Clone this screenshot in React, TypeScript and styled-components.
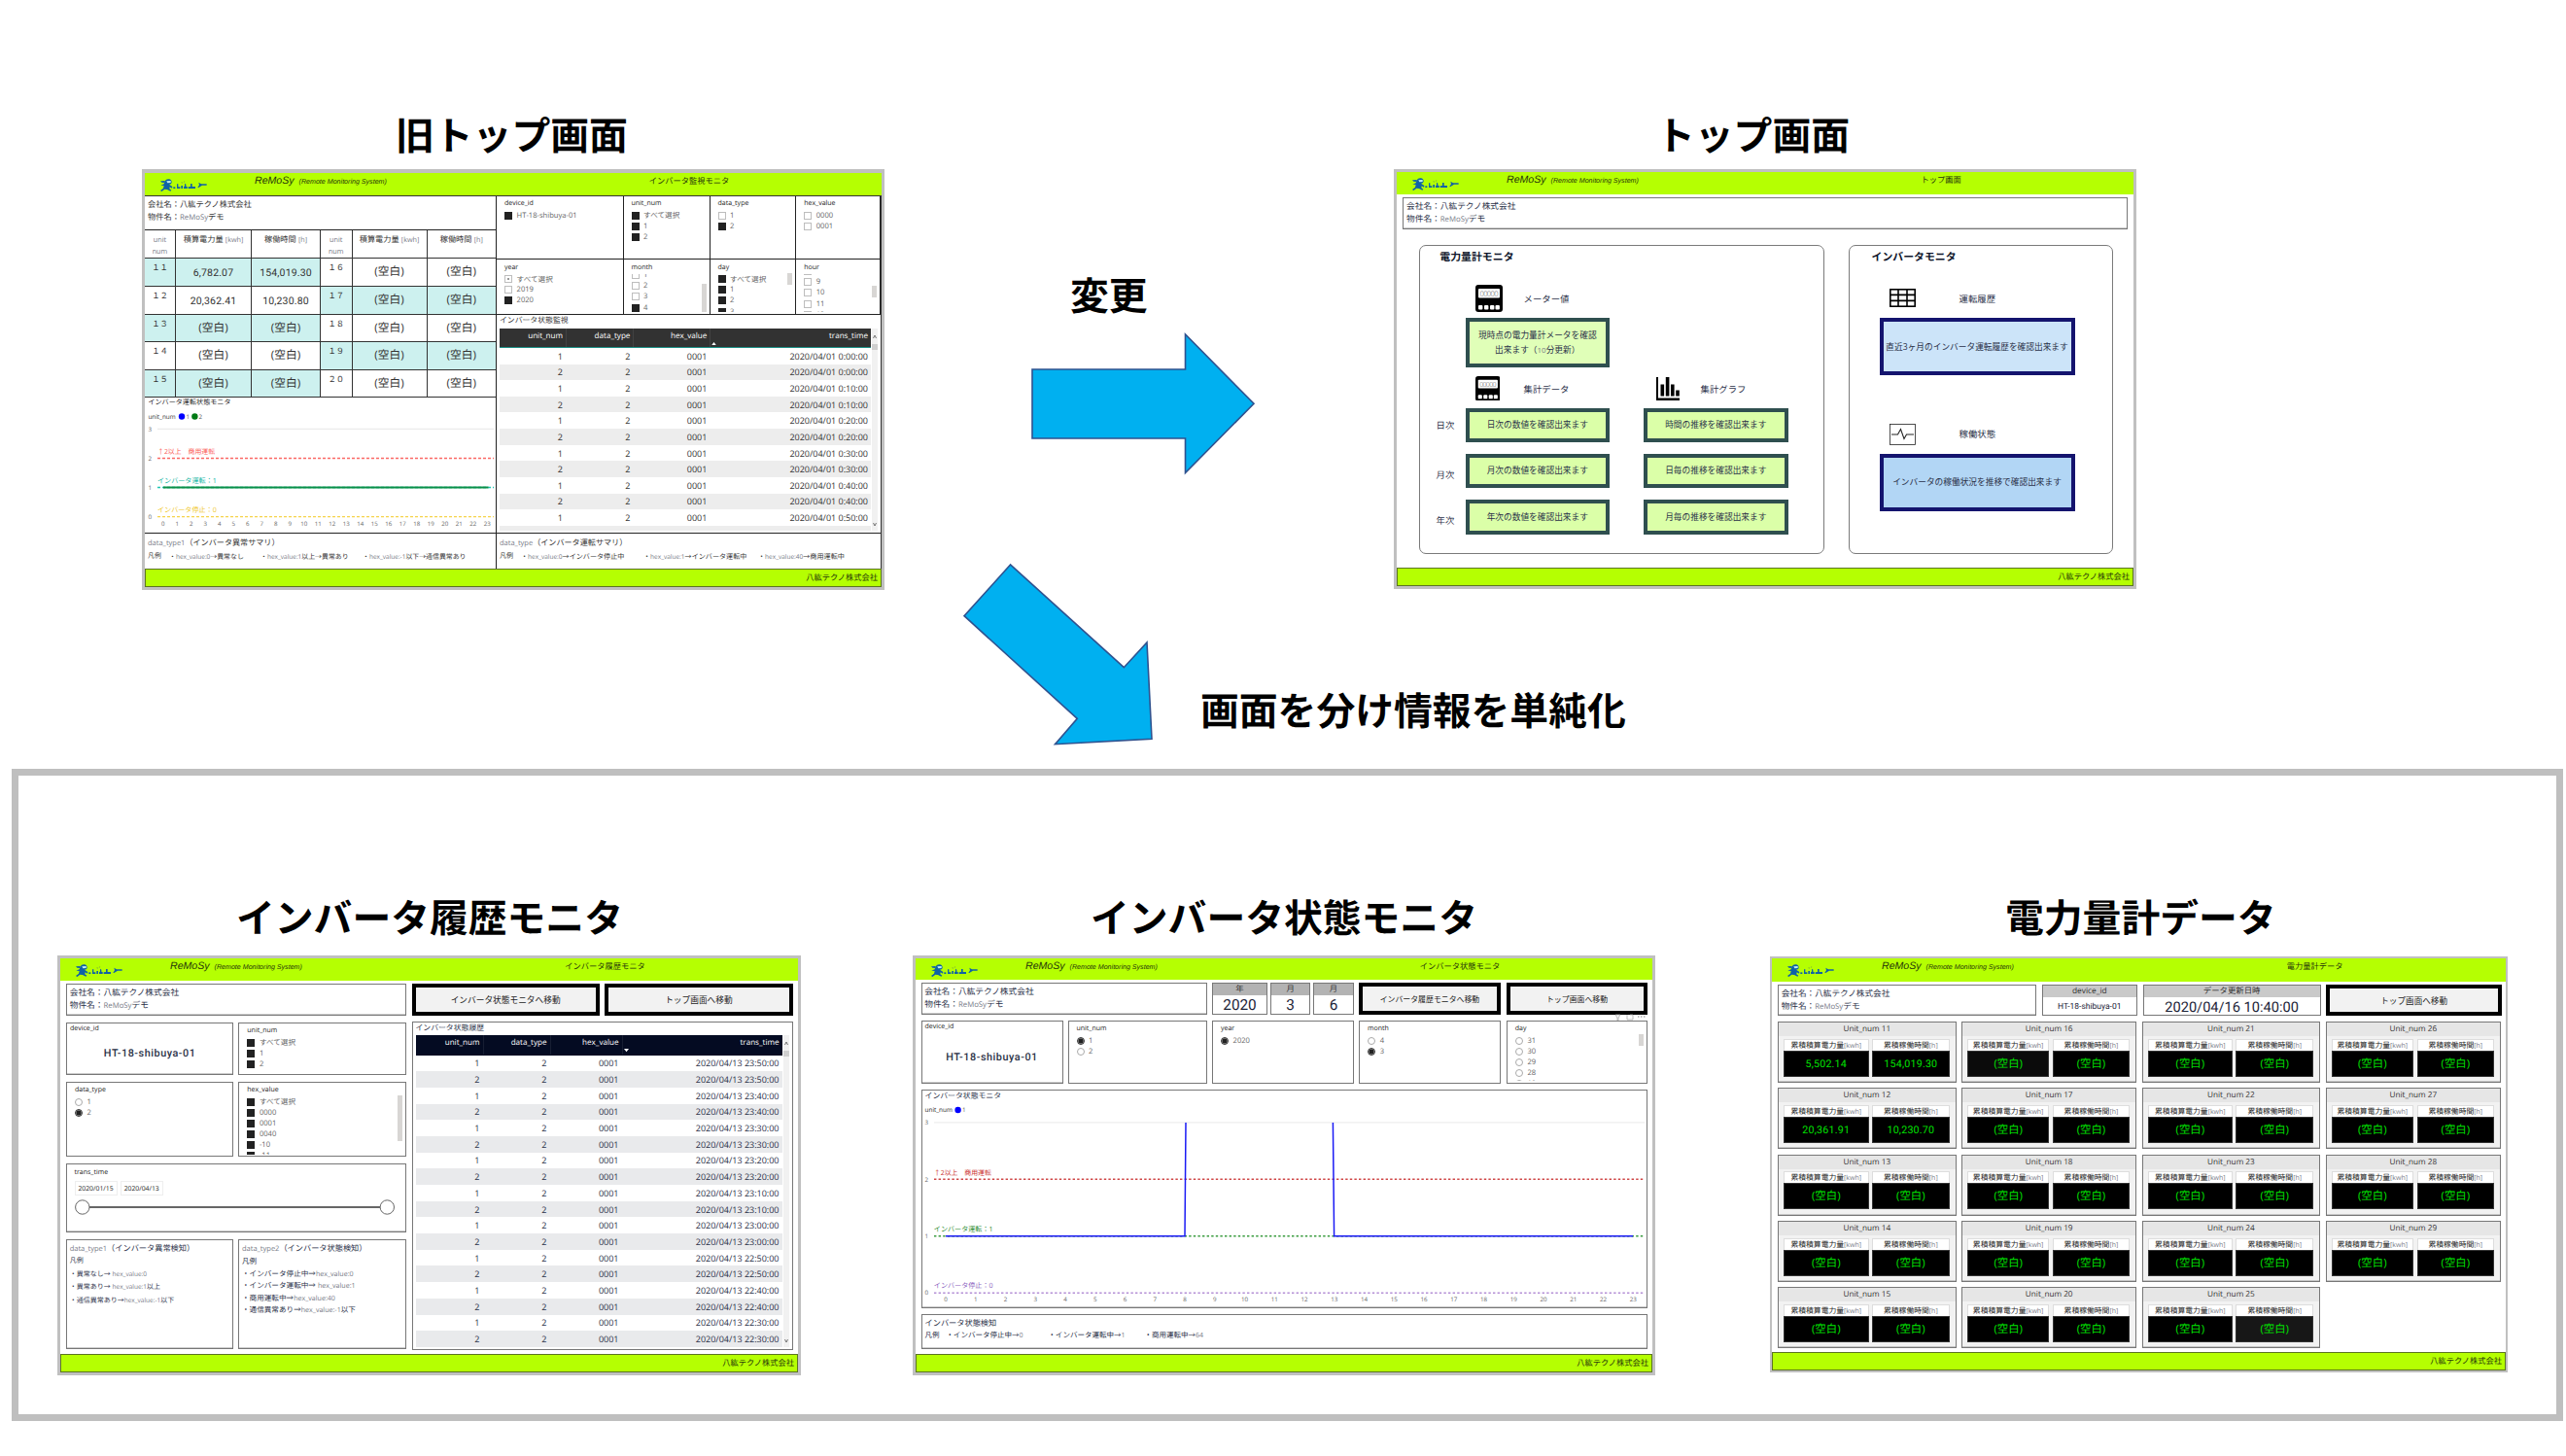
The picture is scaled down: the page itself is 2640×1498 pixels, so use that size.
import React from 'react'
import styled, { createGlobalStyle, css } from 'styled-components'

const GlobalStyle = createGlobalStyle`
  * {
    box-sizing: border-box;
  }

  body {
    margin: 0;
    background: #fff;
    font-family: 'Open Sans', 'Noto Sans CJK JP', sans-serif;
    text-rendering: geometricPrecision;
  }
`

const LIME = '#b5ff02'
const BLANK = '(空白)'

/* ---------- スライド全体 ---------- */

const Slide = styled.main`
  position: relative;
  width: 2640px;
  height: 1498px;
  overflow: hidden;
  background: #fff;
`

const GroupFrame = styled.div`
  position: absolute;
  left: 12px;
  top: 791px;
  width: 2625px;
  height: 671px;
  border: 7px solid #bfbfbf;
`

const Caption = styled.h2<{ $x: number; $y: number }>`
  position: absolute;
  left: ${({ $x }) => $x}px;
  top: ${({ $y }) => $y - 32}px;
  margin: 0;
  font-family: 'Noto Sans CJK JP', sans-serif;
  font-size: 39.8px;
  font-weight: 700;
  line-height: 60px;
  white-space: nowrap;
  color: #000;
`

const Arrows = styled.svg`
  position: absolute;
  left: 980px;
  top: 330px;
`

const Screen = styled.section<{
  $x: number
  $y: number
  $w: number
  $h: number
  $edge?: string
  $color?: string
}>`
  position: absolute;
  left: ${({ $x }) => $x}px;
  top: ${({ $y }) => $y}px;
  width: ${({ $w }) => $w}px;
  height: ${({ $h }) => $h}px;
  display: flex;
  flex-direction: column;
  border: solid #c0c0c0;
  border-width: ${({ $edge }) => $edge ?? '3px'};
  background: #fff;
  color: ${({ $color }) => $color ?? '#2a3048'};
  font-size: 8.7px;
  white-space: nowrap;
`

/* ---------- 共通ヘッダー・フッター ---------- */

const TopBar = styled.header<{ $h: number }>`
  flex: none;
  display: grid;
  grid-template-columns: 113px 249px 1fr;
  height: ${({ $h }) => $h}px;
  background: ${LIME};
  color: #26360a;
`

const LogoSlot = styled.div`
  padding: 5.5px 0 0 16px;
  line-height: 0;
`

const Brand = styled.div`
  padding-top: 1px;
  font-family: 'Liberation Sans', Arial, sans-serif;
  font-style: italic;
  font-size: 10.6px;
  line-height: 15px;

  small {
    margin-left: 2px;
    font-size: 7.1px;
  }
`

const ScreenTitle = styled.div`
  padding-top: 2px;
  text-align: center;
  font-size: 8.25px;
  line-height: 14px;
`

const BottomBar = styled.footer`
  flex: none;
  height: 19px;
  padding-right: 3px;
  border: 1px solid #5c7522;
  background: ${LIME};
  color: #26360a;
  text-align: right;
  font-size: 8.25px;
  line-height: 17.5px;
`

const Logo = () => (
  <svg width="48" height="13.4" viewBox="0 0 144 40" fill="#0f62a6">
    <path d="M14 7Q18 0 26 1Q35 1 35 12Q33 17 27 17L37 24L36 29L29 25L28 31L34 35L31 38L21 33L13 32L4 39L0 36L9 29L11 21L1 20L11 16Z" />
    <path d="M0 7L14 6L13 12L4 11Z" />
    <path d="M19 7L32 6L32 12L22 13Z" fill="#bdeff0" />
    <rect x="40" y="25" width="6" height="5" />
    <path d="M51 16h4v9h6v5H51z" />
    <path d="M64 21h5v9h-5z" />
    <path d="M72 30v-6l3-1v-9l4 3v6l4 1v6z" />
    <path d="M93 15h5v9h10v6H86v-5l7-1z" />
    <path d="M118 11l8 5h17v4h-14l-11 7h-3l5-8z" />
    <path d="M66 9l1 5M74 7l-1 4" stroke="#6c9a4a" strokeWidth="2" fill="none" />
  </svg>
)

const Header = ({ title, h = 23 }: { title: string; h?: number }) => (
  <TopBar $h={h}>
    <LogoSlot>
      <Logo />
    </LogoSlot>
    <Brand>
      ReMoSy <small>(Remote Monitoring System)</small>
    </Brand>
    <ScreenTitle>{title}</ScreenTitle>
  </TopBar>
)

const Footer = () => <BottomBar>八紘テクノ株式会社</BottomBar>

/* ---------- 共通パーツ ---------- */

const Thin = styled.span<{ $size?: number }>`
  font-size: ${({ $size }) => $size ?? 7.8}px;
  color: #777b87;
`

const Box = styled.div<{ $pad?: string }>`
  min-width: 0;
  min-height: 0;
  padding: ${({ $pad }) => $pad ?? '0'};
  overflow: hidden;
  border: 1px solid #777;
  box-shadow: inset 0 -0.6px 0 #999;
`

const CompanyText = styled.div<{ $pitch?: number; $size?: number }>`
  font-size: ${({ $size }) => $size ?? 8.7}px;
  line-height: ${({ $pitch }) => $pitch ?? 13.3}px;
`

const Company = ({ pitch, size }: { pitch?: number; size?: number }) => (
  <CompanyText $pitch={pitch} $size={size}>
    会社名：八紘テクノ株式会社
    <br />
    物件名：<Thin $size={7.8}>ReMoSy</Thin>デモ
  </CompanyText>
)

const MoveButton = styled.button<{ $size?: number }>`
  display: flex;
  align-items: center;
  justify-content: center;
  padding: 0;
  border: 4px solid #000;
  background: #f2f2f2;
  color: #222;
  font-family: inherit;
  font-size: ${({ $size }) => $size ?? 8.7}px;
  white-space: nowrap;
`

const FilterBox = styled.div<{ $lined?: boolean; $top: number }>`
  position: relative;
  display: flex;
  flex-direction: column;
  min-height: 0;
  overflow: hidden;
  padding: ${({ $top }) => $top}px 0 1.5px 8px;
  ${({ $lined }) =>
    $lined
      ? css`
          border: solid #222;
          border-width: 0 1px 1px 0;
        `
      : css`
          border: 1px solid #777;
        `}
`

const FilterTitle = styled.div`
  flex: none;
  font-size: 7px;
  line-height: 12px;
  color: #222;
`

const FilterView = styled.div`
  flex: 1;
  min-height: 0;
  overflow: hidden;
`

const FilterList = styled.div<{ $shift: number }>`
  margin-top: ${({ $shift }) => $shift}px;
`

const Option = styled.div`
  display: flex;
  align-items: center;
  gap: 4.6px;
  height: 11.1px;
  font-size: 7.6px;
  color: #666;
`

const Check = styled.i<{ $on: boolean; $partial?: boolean }>`
  display: flex;
  align-items: center;
  justify-content: center;
  width: 8px;
  height: 8px;
  border: 1px solid ${({ $on }) => ($on ? '#222' : '#bdbdbd')};
  background: ${({ $on }) => ($on ? '#222' : '#fff')};

  &::after {
    content: '';
    width: 2px;
    height: 2px;
    background: ${({ $partial }) => ($partial ? '#999' : 'transparent')};
  }
`

const Radio = styled.i<{ $on: boolean }>`
  width: 8px;
  height: 8px;
  border: 1px solid ${({ $on }) => ($on ? '#333' : '#aaa')};
  border-radius: 50%;
  background: ${({ $on }) =>
    $on ? 'radial-gradient(#222 0 2.2px, #999 2.7px)' : '#fff'};
`

const Thumb = styled.i<{ $top: number; $h: number }>`
  position: absolute;
  right: 3px;
  top: ${({ $top }) => $top}px;
  width: 5px;
  height: ${({ $h }) => $h}px;
  background: #d8d6d4;
`

type FilterProps = {
  name: string
  items: string[]
  on?: string[]
  radio?: boolean
  lined?: boolean
  top?: number
  shift?: number
  thumb?: [number, number]
  partial?: string
}

const Filter = ({
  name,
  items,
  on = [],
  radio,
  lined,
  top = 2.3,
  shift = 0,
  thumb,
  partial,
}: FilterProps) => (
  <FilterBox $lined={lined} $top={top}>
    <FilterTitle>{name}</FilterTitle>
    <FilterView>
      <FilterList $shift={shift}>
        {items.map((item) => (
          <Option key={item}>
            {radio ? (
              <Radio $on={on.includes(item)} />
            ) : (
              <Check $on={on.includes(item)} $partial={partial === item} />
            )}
            {item}
          </Option>
        ))}
      </FilterList>
    </FilterView>
    {thumb && <Thumb $top={thumb[0]} $h={thumb[1]} />}
  </FilterBox>
)

/* ---------- 一覧テーブル ---------- */

const ListArea = styled.div`
  display: grid;
  grid-template-columns: 1fr 6px;
  column-gap: 1px;
  flex: 1;
  min-height: 0;
`

const List = styled.div`
  overflow: hidden;
`

const ListRow = styled.div<{ $cols: string; $h: number; $stripe?: string }>`
  display: grid;
  grid-template-columns: ${({ $cols }) => $cols};
  height: ${({ $h }) => $h}px;
  align-items: center;
  text-align: right;
  font-size: 9px;
  background: ${({ $stripe }) => $stripe ?? '#fff'};

  span {
    padding-right: 3px;
  }
`

const ListHead = styled(ListRow)<{ $bg: string; $line: string }>`
  align-items: stretch;
  border-bottom: 1px solid ${({ $line }) => $line};
  background: ${({ $bg }) => $bg};
  color: #fff;
  font-size: 8.1px;
  line-height: 16px;

  span + span {
    border-left: 1px solid rgba(255, 255, 255, 0.08);
  }
`

const SortMark = styled.svg`
  align-self: end;
  margin: 0 0 2px 1px;
`

const LastHead = styled.span`
  display: flex;
  justify-content: space-between;
`

const ScrollRail = styled.div<{ $thumb: number }>`
  display: flex;
  flex-direction: column;
  align-items: center;
  justify-content: space-between;
  padding: 3px 0 1px;
  font-size: 6px;
  background: linear-gradient(
    #f1f1f1 ${({ $thumb }) => $thumb}px,
    #cfcfcf ${({ $thumb }) => $thumb}px ${({ $thumb }) => $thumb + 6}px,
    #f1f1f1 ${({ $thumb }) => $thumb + 6}px
  );
`

const Chevron = ({ down }: { down?: boolean }) => (
  <svg width="4" height="12" viewBox="0 0 4 12" fill="none" stroke="#555" strokeWidth=".8">
    <path d={down ? 'M.5 5L2 8L3.5 5' : 'M.5 7L2 4L3.5 7'} />
  </svg>
)

type MonitorListProps = {
  rows: string[]
  cols: string
  bg: string
  line: string
  stripe: string
  headHeight: number
  rowHeight: number
  desc?: boolean
}

const MonitorList = ({
  rows,
  cols,
  bg,
  line,
  stripe,
  headHeight,
  rowHeight,
  desc,
}: MonitorListProps) => (
  <ListArea>
    <List>
      <ListHead $cols={cols} $h={headHeight} $bg={bg} $line={line}>
        <span>unit_num</span>
        <span>data_type</span>
        <span>hex_value</span>
        <LastHead>
          <SortMark width="5" height="3.4" viewBox="0 0 6 4" fill="#fff">
            <path d={desc ? 'M0 0h6L3 4z' : 'M0 4h6L3 0z'} />
          </SortMark>
          trans_time
        </LastHead>
      </ListHead>
      {rows.map((time, i) => (
        <ListRow key={i} $cols={cols} $h={rowHeight} $stripe={i % 2 ? stripe : '#fff'}>
          {time && (
            <>
              <span>{(i % 2) + 1}</span>
              <span>2</span>
              <span>0001</span>
              <span>{time}</span>
            </>
          )}
        </ListRow>
      ))}
    </List>
    <ScrollRail $thumb={16}>
      <Chevron />
      <Chevron down />
    </ScrollRail>
  </ListArea>
)

const CardTitle = styled.div<{ $h: number }>`
  flex: none;
  height: ${({ $h }) => $h}px;
  font-size: 7.85px;
  line-height: ${({ $h }) => $h - 1}px;
`

/* ---------- 旧トップ画面 ---------- */

const OldBody = styled.div`
  flex: 1;
  display: grid;
  grid-template-columns: 362px 1fr;
  border: solid #333;
  border-width: 1px 1px 0 0;
  min-height: 0;
`

const OldLeft = styled.div`
  display: grid;
  grid-template-rows: 35px 172.4px 139.3px 1fr;
  border-right: 1px solid #222;
  min-height: 0;
`

const OldRight = styled.div`
  display: grid;
  grid-template-rows: 121.8px 224.9px 1fr;
  min-height: 0;
`

const LinedCell = styled.div<{ $pad?: string }>`
  padding: ${({ $pad }) => $pad ?? '0'};
  border-bottom: 1px solid #222;
  min-height: 0;
`

const UnitTable = styled.div`
  display: grid;
  grid-template-columns: 32px 78px 71px 32.5px 77px 70.5px;
  grid-template-rows: 29.4px repeat(5, 28.6px);
`

const UnitCell = styled.div<{ $tint?: boolean; $kind: 'head' | 'num' | 'value' | 'blank' }>`
  min-height: 0;
  border: solid #333;
  border-width: 0 1px 1px 0;
  text-align: center;
  background: ${({ $tint }) => ($tint ? '#cdf1ef' : '#fff')};

  &:nth-child(6n) {
    border-right: 0;
  }

  ${({ $kind }) =>
    ({
      head: css`
        padding-top: 3.8px;
        font-size: 8.2px;
        line-height: 11.3px;
      `,
      num: css`
        font-size: 8.4px;
        line-height: 19.5px;
      `,
      value: css`
        font-family: Roboto, sans-serif;
        font-size: 10.5px;
        letter-spacing: 0.15px;
        line-height: 29.5px;
      `,
      blank: css`
        font-size: 11.7px;
        line-height: 27.5px;
      `,
    })[$kind]}
`

const FilterGrid = styled.div`
  display: grid;
  grid-template-columns: 130.5px 89px 88.7px 1fr;
  grid-template-rows: 65.4px 56.4px;
`

const ListCard = styled.div<{ $lined?: boolean }>`
  display: flex;
  flex-direction: column;
  padding: 0 3px 2px;
  min-height: 0;
  border: 1px solid #777;
  ${({ $lined }) =>
    $lined &&
    css`
      border-color: #222;
      border-width: 0 0 1px;
    `}
`

const Legend = styled.div`
  padding: 3px 3px 0;
  font-size: 8.1px;
  line-height: 13px;
`

const LegendItems = styled.div<{ $cols: string; $size: number }>`
  display: grid;
  grid-template-columns: ${({ $cols }) => $cols};
  font-size: ${({ $size }) => $size}px;
`

const oldUnits = [
  ['１１', '6,782.07', '154,019.30', '１６', BLANK, BLANK],
  ['１２', '20,362.41', '10,230.80', '１７', BLANK, BLANK],
  ['１３', BLANK, BLANK, '１８', BLANK, BLANK],
  ['１４', BLANK, BLANK, '１９', BLANK, BLANK],
  ['１５', BLANK, BLANK, '２０', BLANK, BLANK],
]

const oldRows = ['0:00', '0:10', '0:20', '0:30', '0:40', '0:50']
  .flatMap((t) => [`2020/04/01 ${t}:00`, `2020/04/01 ${t}:00`])
  .map((t, i) => (i < 11 ? t : ''))

const hours = Array.from({ length: 24 }, (_, i) => i)

const ChartText = styled.text<{ $size: number; $fill: string }>`
  font-size: ${({ $size }) => $size}px;
  fill: ${({ $fill }) => $fill};
`

const OldChart = () => (
  <svg width="361" height="138" viewBox="149 410 361 138">
    <ChartText x="152.4" y="417" $size={7.1} $fill="#222">
      インバータ運転状態モニタ
    </ChartText>
    <ChartText x="152.4" y="432" $size={6.4} $fill="#333">
      unit_num
    </ChartText>
    <circle cx="187" cy="429.5" r="3.2" fill="#00f" />
    <ChartText x="191.5" y="432" $size={6.2} $fill="#555">
      1
    </ChartText>
    <circle cx="200.4" cy="429.5" r="3.2" fill="#007a14" />
    <ChartText x="204.5" y="432" $size={6.2} $fill="#555">
      2
    </ChartText>
    {[3, 2, 1, 0].map((n, i) => (
      <ChartText key={n} x="152.5" y={444.6 + i * 30.1} $size={6.2} $fill="#666">
        {n}
      </ChartText>
    ))}
    <path d="M162 442.3H508" stroke="#e6e6e6" />
    <g strokeWidth="1.5" strokeDasharray="3 2">
      <path d="M162 472.5H508" stroke="#fb6a66" />
      <path d="M162 502.4H508" stroke="#1fc5b3" />
      <path d="M162 532.6H508" stroke="#f5d44c" strokeWidth="1.2" />
    </g>
    <path d="M168 502.5H502.4" stroke="#0a8f48" strokeWidth="2" />
    <ChartText x="162" y="467.8" $size={6.9} $fill="#fb5a56">
      ↑2以上　商用運転
    </ChartText>
    <ChartText x="162" y="497.8" $size={7.1} $fill="#12b5a4">
      インバータ運転：1
    </ChartText>
    <ChartText x="162" y="527.6" $size={7.1} $fill="#f0c72a">
      インバータ停止：0
    </ChartText>
    {hours.map((n) => (
      <ChartText key={n} x={167.8 + n * 14.5} y="541.6" textAnchor="middle" $size={6.1} $fill="#666">
        {n}
      </ChartText>
    ))}
  </svg>
)

const OldTopScreen = () => (
  <Screen $x={146} $y={174} $w={764} $h={433} $edge="4px 3px 3px" $color="#333">
    <Header title="インバータ監視モニタ" />
    <OldBody>
      <OldLeft>
        <LinedCell $pad="3px">
          <Company pitch={12.7} size={8.25} />
        </LinedCell>
        <UnitTable>
          {[0, 1].map((n) => (
            <React.Fragment key={n}>
              <UnitCell $kind="head">
                <Thin $size={7.3}>
                  unit
                  <br />
                  num
                </Thin>
              </UnitCell>
              <UnitCell $kind="head">
                積算電力量 <Thin $size={7.2}>[kwh]</Thin>
              </UnitCell>
              <UnitCell $kind="head">
                稼働時間 <Thin $size={7.2}>[h]</Thin>
              </UnitCell>
            </React.Fragment>
          ))}
          {oldUnits.map((row, r) =>
            row.map((v, c) => (
              <UnitCell
                key={`${r}-${c}`}
                $kind={c % 3 === 0 ? 'num' : v === BLANK ? 'blank' : 'value'}
                $tint={c < 3 ? r % 2 === 0 : r % 2 === 1}
              >
                {v}
              </UnitCell>
            )),
          )}
        </UnitTable>
        <LinedCell>
          <OldChart />
        </LinedCell>
        <Legend>
          <Thin $size={7.5}>data_type1</Thin>（インバータ異常サマリ）
          <LegendItems $cols="22px 94px 105px 1fr" $size={6.9}>
            <span>凡例</span>
            <span>
              ・<Thin $size={6.5}>hex_value:0</Thin>→異常なし
            </span>
            <span>
              ・<Thin $size={6.5}>hex_value:1</Thin>以上→異常あり
            </span>
            <span>
              ・<Thin $size={6.5}>hex_value:-1</Thin>以下→通信異常あり
            </span>
          </LegendItems>
        </Legend>
      </OldLeft>
      <OldRight>
        <FilterGrid>
          <Filter lined name="device_id" items={['HT-18-shibuya-01']} on={['HT-18-shibuya-01']} />
          <Filter lined name="unit_num" items={['すべて選択', '1', '2']} on={['すべて選択', '1', '2']} />
          <Filter lined name="data_type" items={['1', '2']} on={['2']} />
          <Filter lined name="hex_value" items={['0000', '0001']} />
          <Filter
            lined
            name="year"
            items={['すべて選択', '2019', '2020']}
            on={['2020']}
            partial="すべて選択"
          />
          <Filter
            lined
            name="month"
            items={['1', '2', '3', '4']}
            on={['4']}
            shift={-4}
            thumb={[24.5, 29.5]}
          />
          <Filter
            lined
            name="day"
            items={['すべて選択', '1', '2', '3']}
            on={['すべて選択', '1', '2', '3']}
            thumb={[13.5, 12]}
          />
          <Filter
            lined
            name="hour"
            items={['8', '9', '10', '11', '12']}
            shift={-8}
            thumb={[27, 12]}
          />
        </FilterGrid>
        <ListCard $lined>
          <CardTitle $h={13.8}>インバータ状態監視</CardTitle>
          <MonitorList
            rows={oldRows}
            cols="68px 69.4px 79px 1fr"
            bg="#323232"
            line="#1a8f85"
            stripe="#ededed"
            headHeight={20.3}
            rowHeight={16.65}
          />
        </ListCard>
        <Legend>
          <Thin $size={7.5}>data_type</Thin>（インバータ運転サマリ）
          <LegendItems $cols="22px 126px 118px 1fr" $size={7.1}>
            <span>凡例</span>
            <span>
              ・<Thin $size={6.5}>hex_value:0</Thin>→インバータ停止中
            </span>
            <span>
              ・<Thin $size={6.5}>hex_value:1</Thin>→インバータ運転中
            </span>
            <span>
              ・<Thin $size={6.5}>hex_value:40</Thin>→商用運転中
            </span>
          </LegendItems>
        </Legend>
      </OldRight>
    </OldBody>
    <Footer />
  </Screen>
)

/* ---------- トップ画面 ---------- */

const TopBody = styled.div`
  flex: 1;
  display: grid;
  grid-template-rows: 32.5px 318.5px;
  row-gap: 16px;
  padding-top: 3px;
`

const TopCompany = styled(Box)`
  margin: 0 6px;
  padding: 2px 3px;
`

const Groups = styled.div`
  display: grid;
  grid-template-columns: 416.5px 272px;
  column-gap: 25.5px;
  padding-left: 23px;
`

const Group = styled.div<{ $pad: string }>`
  padding: ${({ $pad }) => $pad};
  border: 1.6px solid #7a7a7a;
  border-radius: 7px;
`

const GroupTitle = styled.h3`
  margin: 0 0 0 2px;
  font-size: 10.9px;
  font-weight: 700;
  line-height: 16px;
  color: #10172c;
`

const MeterTop = styled.div`
  padding-left: 30px;
`

const IconRow = styled.div<{ $h: number; $cols: string; $drop?: number }>`
  display: grid;
  grid-template-columns: ${({ $cols }) => $cols};
  align-items: center;
  height: ${({ $h }) => $h}px;
  padding-top: ${({ $drop }) => $drop ?? 0}px;
  font-size: 9.4px;
`

const CardSlot = styled.div<{ $w: number; $h: number; $left?: number }>`
  width: ${({ $w }) => $w}px;
  height: ${({ $h }) => $h}px;
  margin-left: ${({ $left }) => $left ?? 0}px;
`

const Card = styled.button<{ $tone: 'pale' | 'green' | 'sky' | 'blue' }>`
  display: flex;
  align-items: center;
  justify-content: center;
  width: 100%;
  height: 100%;
  padding: 1px 0 0;
  border: 4px solid ${({ $tone }) => ($tone === 'sky' || $tone === 'blue' ? '#14146e' : '#2f4f4f')};
  background: ${({ $tone }) =>
    ({ pale: '#e0ffb8', green: '#dbffa8', sky: '#cce4f9', blue: '#b2d6f5' })[$tone]};
  color: #2a3048;
  font-family: inherit;
  font-size: 8.7px;
  line-height: 13.4px;
  white-space: nowrap;
`

const PeriodRow = styled.div`
  display: grid;
  grid-template-columns: 30px 148.5px 148.5px;
  column-gap: 0;
  height: 35.5px;
  margin-bottom: 11.8px;
  align-items: center;
  font-size: 9.4px;

  & + & > span {
    padding-top: 6px;
  }
`

const LowIcon = styled.span`
  padding-top: 40px;
  line-height: 12px;

  svg {
    display: block;
  }
`

const MeterIcon = ({ size }: { size: number }) => (
  <svg width={size} height={size} viewBox="0 0 28 28">
    <rect width="28" height="28" rx="3" fill="#000" />
    <rect x="3" y="4" width="22" height="9.5" rx="1" fill="#fff" />
    <text x="14" y="11.6" textAnchor="middle" fontSize="7.6" fontWeight="300" fill="#555" textLength="19">
      00000
    </text>
    {[3, 9, 15, 20.5].map((x) => (
      <rect key={x} x={x} y="21" width="4.4" height="4.4" rx="1" fill="#fff" />
    ))}
  </svg>
)

const BarIcon = () => (
  <svg width="24" height="24" viewBox="0 0 24 24" fill="#000">
    <path d="M0 0h2v21.6h22V24H0z M4.5 7.5h3.6v12H4.5z M9.8 0h3.6v19.5H9.8z M15 7.5h3.6v12H15z M20.2 13.5h3.6v6h-3.6z" />
  </svg>
)

const TableIcon = () => (
  <svg width="27" height="19" viewBox="0 0 27 19" fill="none" stroke="#000" strokeWidth="1.6">
    <rect x=".8" y=".8" width="25.4" height="17.4" />
    <path d="M9 1v17M18 1v17M1 6.4h25M1 12.4h25" />
  </svg>
)

const PulseIcon = () => (
  <svg width="27" height="22" viewBox="0 0 27 22" fill="none" stroke="#222">
    <rect x=".5" y=".5" width="26" height="21" strokeWidth=".8" />
    <path d="M2 11H8.5L11.5 5.5L15 15.5L17.5 11H25" strokeWidth="1.1" />
  </svg>
)

const TopScreen = () => (
  <Screen $x={1434} $y={174} $w={764} $h={432}>
    <Header title="トップ画面" />
    <TopBody>
      <TopCompany>
        <Company />
      </TopCompany>
      <Groups>
        <Group $pad="4px 0 0 16.5px">
          <GroupTitle>&thinsp;電力量計モニタ</GroupTitle>
          <MeterTop>
            <IconRow $h={54.8} $drop={14} $cols="10px 50px 1fr">
              <i />
              <MeterIcon size={28} />
              <span>メーター値</span>
            </IconRow>
            <CardSlot $w={148.5} $h={50.7}>
              <Card $tone="pale">
                <span>
                  現時点の電力量計メータを確認
                  <br />
                  出来ます（<Thin $size={8}>10</Thin>分更新）
                </span>
              </Card>
            </CardSlot>
            <IconRow $h={41.6} $drop={1.5} $cols="10px 50px 136px 46px 1fr">
              <i />
              <MeterIcon size={25.7} />
              <span>集計データ</span>
              <BarIcon />
              <span>集計グラフ</span>
            </IconRow>
          </MeterTop>
          {[
            ['日次', '日次の数値を確認出来ます', '時間の推移を確認出来ます'],
            ['月次', '月次の数値を確認出来ます', '日毎の推移を確認出来ます'],
            ['年次', '年次の数値を確認出来ます', '月毎の推移を確認出来ます'],
          ].map(([label, data, graph]) => (
            <PeriodRow key={label}>
              <span>{label}</span>
              <Card $tone="green">{data}</Card>
              <CardSlot $w={148.5} $h={35.5} $left={35}>
                <Card $tone="green">{graph}</Card>
              </CardSlot>
            </PeriodRow>
          ))}
        </Group>
        <Group $pad="4px 0 0 20.5px">
          <GroupTitle>インバータモニタ</GroupTitle>
          <IconRow $h={54.8} $drop={14} $cols="20px 72px 1fr">
            <i />
            <TableIcon />
            <span>運転履歴</span>
          </IconRow>
          <CardSlot $w={201} $h={59} $left={10}>
            <Card $tone="sky">直近3ヶ月のインバータ運転履歴を確認出来ます</Card>
          </CardSlot>
          <IconRow $h={80.8} $cols="20px 72px 1fr">
            <i />
            <LowIcon>
              <PulseIcon />
            </LowIcon>
            <LowIcon>稼働状態</LowIcon>
          </IconRow>
          <CardSlot $w={201} $h={59} $left={10}>
            <Card $tone="blue">インバータの稼働状況を推移で確認出来ます</Card>
          </CardSlot>
        </Group>
      </Groups>
    </TopBody>
    <Footer />
  </Screen>
)

/* ---------- インバータ履歴モニタ ---------- */

const HistoryBody = styled.div`
  flex: 1;
  display: grid;
  grid-template-columns: 350px 392px;
  column-gap: 5.5px;
  padding: 3px 0 4.5px 6px;
  min-height: 0;
`

const HistoryLeft = styled.div`
  display: grid;
  grid-template-columns: 172.3px 172.7px;
  grid-template-rows: 33px 53.8px 77.5px 71.3px 113.2px;
  column-gap: 5px;
  align-content: space-between;
`

const Wide = styled(Box)`
  grid-column: 1 / -1;
`

const HistoryRight = styled.div`
  display: grid;
  grid-template-columns: 1fr 1fr;
  grid-template-rows: 33px 1fr;
  column-gap: 5.5px;
  row-gap: 5.5px;
  min-height: 0;

  > :last-child {
    grid-column: 1 / -1;
  }
`

const DeviceBox = styled(Box)`
  display: flex;
  flex-direction: column;
  padding: 0 3px 0;
`

const DeviceName = styled.div<{ $pad: number }>`
  flex: 1;
  padding-top: ${({ $pad }) => $pad}px;
  text-align: center;
  font-family: Roboto, sans-serif;
  font-size: 10.8px;
  font-weight: 500;
  letter-spacing: 0.55px;
  color: #2a3146;
`

const DateFields = styled.div`
  display: flex;
  gap: 3.2px;
  margin: 2px 0 4px;

  span {
    width: 44px;
    height: 15px;
    border: 1px solid #eee;
    text-align: center;
    font-size: 6.8px;
    line-height: 13px;
    color: #222;
  }
`

const NoteList = styled.div<{ $size: number }>`
  font-size: ${({ $size }) => $size}px;
  line-height: 12.55px;
`

const historyRows = ['23:50', '23:40', '23:30', '23:20', '23:10', '23:00', '22:50', '22:40', '22:30'].flatMap(
  (t) => [`2020/04/13 ${t}:00`, `2020/04/13 ${t}:00`],
)

const HistoryScreen = () => (
  <Screen $x={59} $y={983} $w={765} $h={432}>
    <Header title="インバータ履歴モニタ" />
    <HistoryBody>
      <HistoryLeft>
        <Wide $pad="2px 2.7px">
          <Company />
        </Wide>
        <DeviceBox>
          <FilterTitle>device_id</FilterTitle>
          <DeviceName $pad={12}>HT-18-shibuya-01</DeviceName>
        </DeviceBox>
        <Filter top={2.5} name="unit_num" items={['すべて選択', '1', '2']} on={['すべて選択', '1', '2']} />
        <Filter top={2.5} radio name="data_type" items={['1', '2']} on={['2']} />
        <Filter
          top={2.5}
          name="hex_value"
          items={['すべて選択', '0000', '0001', '0040', '-10', '-11']}
          on={['すべて選択', '0000', '0001', '0040', '-10', '-11']}
          thumb={[13.5, 46.5]}
        />
        <Wide $pad="2.5px 7.5px">
          <FilterTitle>trans_time</FilterTitle>
          <DateFields>
            <span>2020/01/15</span>
            <span>2020/04/13</span>
          </DateFields>
          <svg width="330" height="16" viewBox="0 0 330 16" fill="#fff" stroke="#666">
            <path d="M15 8H314" strokeWidth="2" />
            <circle cx="7.8" cy="8" r="7.2" />
            <circle cx="321.3" cy="8" r="7.2" />
          </svg>
        </Wide>
        <Box $pad="3px 2.7px">
          <CompanyText $size={8.2} $pitch={12.8}>
            <Thin $size={7.5}>data_type1</Thin>（インバータ異常検知）
          </CompanyText>
          <NoteList $size={7}>
            凡例
            <br />
            ・異常なし→ <Thin $size={6.5}>hex_value:0</Thin>
            <br />
            ・異常あり→ <Thin $size={6.5}>hex_value:1</Thin>以上
            <br />
            ・通信異常あり→<Thin $size={6.5}>hex_value:-1</Thin>以下
          </NoteList>
        </Box>
        <Box $pad="3px 2.7px">
          <CompanyText $size={8.2} $pitch={12.8}>
            <Thin $size={7.5}>data_type2</Thin>（インバータ状態検知）
          </CompanyText>
          <NoteList $size={7.6}>
            凡例
            <br />
            ・インバータ停止中→<Thin $size={7.1}>hex_value:0</Thin>
            <br />
            ・インバータ運転中→ <Thin $size={7.1}>hex_value:1</Thin>
            <br />
            ・商用運転中→<Thin $size={7.1}>hex_value:40</Thin>
            <br />
            ・通信異常あり→<Thin $size={7.1}>hex_value:-1</Thin>以下
          </NoteList>
        </Box>
      </HistoryLeft>
      <HistoryRight>
        <MoveButton>インバータ状態モニタへ移動</MoveButton>
        <MoveButton>トップ画面へ移動</MoveButton>
        <ListCard>
          <CardTitle $h={13}>インバータ状態履歴</CardTitle>
          <MonitorList
            desc
            rows={historyRows}
            cols="69px 69px 74px 1fr"
            bg="#040b22"
            line="#040b22"
            stripe="#e9eaec"
            headHeight={21}
            rowHeight={16.7}
          />
        </ListCard>
      </HistoryRight>
    </HistoryBody>
    <Footer />
  </Screen>
)

/* ---------- インバータ状態モニタ ---------- */

const StateBody = styled.div`
  flex: 1;
  display: grid;
  grid-template-rows: 32.8px 65.2px 225.4px 36px;
  row-gap: 6px;
  padding: 3px 0 0 5.5px;
`

const StateRow = styled.div<{ $cols: string }>`
  display: grid;
  grid-template-columns: ${({ $cols }) => $cols};
  grid-template-rows: minmax(0, 1fr);
  min-height: 0;
`

const Tile = styled.div<{ $head: string }>`
  display: flex;
  flex-direction: column;
  min-height: 0;
  border: 1px solid #777;
  text-align: center;

  > :first-child {
    flex: none;
    height: 12px;
    background: ${({ $head }) => $head};
    font-size: 8.4px;
    line-height: 12px;
    color: #333;
  }
`

const TileValue = styled.div<{ $size: number }>`
  flex: 1;
  display: flex;
  align-items: center;
  justify-content: center;
  padding-top: 1px;
  font-family: Roboto, sans-serif;
  font-size: ${({ $size }) => $size}px;
  color: #1d2438;
`

const DayCell = styled.div`
  position: relative;
  display: grid;
  grid-template-rows: minmax(0, 1fr);
  min-height: 0;
`

const VisualTools = styled.svg`
  position: absolute;
  right: 2px;
  top: -7px;
`

const StateChart = () => (
  <svg width="745" height="223" viewBox="949 1122 745 223">
    <ChartText x="951.6" y="1129.8" $size={7.85} $fill="#2a3048">
      インバータ状態モニタ
    </ChartText>
    <ChartText x="951.6" y="1144.4" $size={6.4} $fill="#222">
      unit_num
    </ChartText>
    <circle cx="985.6" cy="1142" r="3.2" fill="#00f" />
    <ChartText x="990" y="1144.4" $size={6.2} $fill="#555">
      1
    </ChartText>
    {[3, 2, 1, 0].map((n, i) => (
      <ChartText key={n} x="951.6" y={1157.2 + i * 58.4} $size={6.2} $fill="#666">
        {n}
      </ChartText>
    ))}
    <path d="M961 1154.9H1692" stroke="#eaeaea" />
    <g strokeWidth="1.5" strokeDasharray="2.4 2.2">
      <path d="M961 1213.3H1692" stroke="#cf4747" />
      <path d="M961 1271.8H1692" stroke="#3a9c3f" />
      <path d="M961 1330.2H1692" stroke="#b48fd6" />
    </g>
    <path
      d="M973 1271.8H1219L1220 1154.9M1371.4 1154.9L1372.6 1271.8H1680"
      fill="none"
      stroke="#1a1af5"
      strokeWidth="1.5"
    />
    <ChartText x="960.8" y="1208.5" $size={6.9} $fill="#c92c2c">
      ↑2以上　商用運転
    </ChartText>
    <ChartText x="960.8" y="1267" $size={7.1} $fill="#2b8c30">
      インバータ運転：1
    </ChartText>
    <ChartText x="960.8" y="1325.2" $size={7.1} $fill="#8b5fc0">
      インバータ停止：0
    </ChartText>
    {hours.map((n) => (
      <ChartText key={n} x={973 + n * 30.75} y="1339" textAnchor="middle" $size={6.2} $fill="#666">
        {n}
      </ChartText>
    ))}
  </svg>
)

const StateScreen = () => (
  <Screen $x={939} $y={983} $w={764} $h={432}>
    <Header title="インバータ状態モニタ" h={22} />
    <StateBody>
      <StateRow $cols="294px 5.5px 57px 3px 41.3px 3px 41.3px 5.5px 145.7px 6px 145.5px">
        <Box $pad="2px 2.7px">
          <Company />
        </Box>
        <i />
        <Tile $head="#b3b3b3">
          <span>年</span>
          <TileValue $size={15.3}>2020</TileValue>
        </Tile>
        <i />
        <Tile $head="#b3b3b3">
          <span>月</span>
          <TileValue $size={15.3}>3</TileValue>
        </Tile>
        <i />
        <Tile $head="#b3b3b3">
          <span>月</span>
          <TileValue $size={15.3}>6</TileValue>
        </Tile>
        <i />
        <MoveButton $size={7.9}>インバータ履歴モニタへ移動</MoveButton>
        <i />
        <MoveButton $size={7.9}>トップ画面へ移動</MoveButton>
      </StateRow>
      <StateRow $cols="146px 5px 143px 5.5px 145.6px 5.5px 145.7px 6px 145.5px">
        <DeviceBox>
          <FilterTitle>device_id</FilterTitle>
          <DeviceName $pad={18.5}>HT-18-shibuya-01</DeviceName>
        </DeviceBox>
        <i />
        <Filter top={2.5} radio name="unit_num" items={['1', '2']} on={['1']} />
        <i />
        <Filter top={2.5} radio name="year" items={['2020']} on={['2020']} />
        <i />
        <Filter top={2.5} radio name="month" items={['4', '3']} on={['3']} />
        <i />
        <DayCell>
          <Filter
            top={2.5}
            radio
            name="day"
            items={['31', '30', '29', '28', '18']}
            thumb={[13.5, 12]}
          />
          <VisualTools width="32" height="7" viewBox="0 0 32 7" fill="none" stroke="#aaa" strokeWidth=".8">
            <path d="M1 1h5L4 4v3H3V4z M13 1v5h6V4 M16 1h3v3" />
            <path d="M24 3h1.4M27 3h1.4M30 3h1.4" strokeWidth="1.3" />
          </VisualTools>
        </DayCell>
      </StateRow>
      <StateRow $cols="747.6px">
        <Box>
          <StateChart />
        </Box>
      </StateRow>
      <StateRow $cols="747.6px">
        <Box $pad="2px 3px">
          <CompanyText $size={8.2} $pitch={13}>
            インバータ状態検知
            <LegendItems $cols="22px 105px 99px 1fr" $size={7.5}>
              <span>凡例</span>
              <span>
                ・インバータ停止中→<Thin $size={7}>0</Thin>
              </span>
              <span>
                ・インバータ運転中→<Thin $size={7}>1</Thin>
              </span>
              <span>
                ・商用運転中→<Thin $size={7}>64</Thin>
              </span>
            </LegendItems>
          </CompanyText>
        </Box>
      </StateRow>
    </StateBody>
    <Footer />
  </Screen>
)

/* ---------- 電力量計データ ---------- */

const PowerBody = styled.div`
  flex: 1;
  display: flex;
  flex-direction: column;
  padding: 3px 0 0 6px;
`

const PowerTop = styled.div`
  display: grid;
  grid-template-columns: 266px 98px 183px 180.5px;
  grid-template-rows: minmax(0, 1fr);
  column-gap: 5.8px;
  height: 32.4px;
  margin-bottom: 5.8px;
`

const Meters = styled.div`
  display: grid;
  grid-auto-flow: column;
  grid-template-columns: 183.6px 180px 183.2px 180.5px;
  grid-template-rows: repeat(5, 63px);
  column-gap: 5.6px;
  row-gap: 5.3px;
`

const Meter = styled.div`
  display: flex;
  flex-direction: column;
  border: 1px solid #777;
  box-shadow: inset 0 -0.6px 0 #999;
  background: #f2f2f2;
`

const MeterName = styled.div`
  height: 14px;
  background: #e6e6e6;
  text-align: center;
  font-size: 8.2px;
  line-height: 13px;
  color: #333;
`

const Readings = styled.div`
  display: grid;
  grid-template-columns: 1fr 79.5px;
  column-gap: 3.6px;
  padding: 2.5px 6px 0 5px;
`

const ReadingLabel = styled.div`
  height: 12px;
  border: 1px solid #ddd;
  border-bottom: 0;
  background: #fff;
  text-align: center;
  font-size: 7.8px;
  line-height: 12px;
  color: #222;
`

const ReadingValue = styled.div<{ $bg: string; $blank: boolean }>`
  display: flex;
  align-items: center;
  justify-content: center;
  height: 27px;
  padding-bottom: 1px;
  border: 1px solid #333;
  background: ${({ $bg }) => $bg};
  color: #00e000;
  ${({ $blank }) =>
    $blank
      ? css`
          font-size: 11.4px;
        `
      : css`
          padding-bottom: 0;
          font-family: Roboto, sans-serif;
          font-size: 10.7px;
          letter-spacing: 0.2px;
        `}
`

const readings: Record<number, [string, string]> = {
  11: ['5,502.14', '154,019.30'],
  12: ['20,361.91', '10,230.70'],
}

// 黒が少し薄く表示されるセル
const faded: Record<string, string> = { '16-0': '#0b0b0b', '25-1': '#171717' }

const PowerMeter = ({ unit }: { unit: number }) => (
  <Meter>
    <MeterName>Unit_num {unit}</MeterName>
    <Readings>
      <ReadingLabel>
        累積積算電力量<Thin $size={7}>[kwh]</Thin>
      </ReadingLabel>
      <ReadingLabel>
        累積稼働時間<Thin $size={7}>[h]</Thin>
      </ReadingLabel>
      {(readings[unit] ?? [BLANK, BLANK]).map((v, i) => (
        <ReadingValue key={i} $blank={v === BLANK} $bg={faded[`${unit}-${i}`] ?? '#000'}>
          {v}
        </ReadingValue>
      ))}
    </Readings>
  </Meter>
)

const PowerScreen = () => (
  <Screen $x={1821} $y={984} $w={759} $h={428} $edge="2px">
    <Header title="電力量計データ" h={24} />
    <PowerBody>
      <PowerTop>
        <Box $pad="2px 2.7px">
          <Company size={8.65} />
        </Box>
        <Tile $head="#c9c9c9">
          <span>device_id</span>
          <TileValue $size={8.5}>HT-18-shibuya-01</TileValue>
        </Tile>
        <Tile $head="#c9c9c9">
          <span>データ更新日時</span>
          <TileValue $size={14.6}>2020/04/16 10:40:00</TileValue>
        </Tile>
        <MoveButton $size={8.6}>トップ画面へ移動</MoveButton>
      </PowerTop>
      <Meters>
        {Array.from({ length: 19 }, (_, i) => (
          <PowerMeter key={i} unit={i + 11} />
        ))}
      </Meters>
    </PowerBody>
    <Footer />
  </Screen>
)

const App = () => (
  <>
    <GlobalStyle />
    <Slide>
      <GroupFrame />

      <Caption $x={407} $y={140}>旧トップ画面</Caption>
      <Caption $x={1704} $y={140}>トップ画面</Caption>
      <Caption $x={1101} $y={305}>変更</Caption>
      <Caption $x={1235} $y={732}>画面を分け情報を単純化</Caption>
      <Caption $x={243} $y={945}>インバータ履歴モニタ</Caption>
      <Caption $x={1122} $y={945}>インバータ状態モニタ</Caption>
      <Caption $x={2063} $y={945}>電力量計データ</Caption>

      <Arrows
        width="330"
        height="450"
        viewBox="980 330 330 450"
        fill="#00b0f0"
        stroke="#2f528f"
        strokeWidth="1.6"
      >
        <path d="M1062 380H1219.5V344L1290 415.3L1219.5 486.5V451H1062Z" />
        <path d="M1039.5 581L992 633.7L1108.3 739.3L1085.5 765.7L1185 760.3L1180 661L1156.3 686.7Z" />
      </Arrows>

      <OldTopScreen />
      <TopScreen />
      <HistoryScreen />
      <StateScreen />
      <PowerScreen />
    </Slide>
  </>
)

export default App
